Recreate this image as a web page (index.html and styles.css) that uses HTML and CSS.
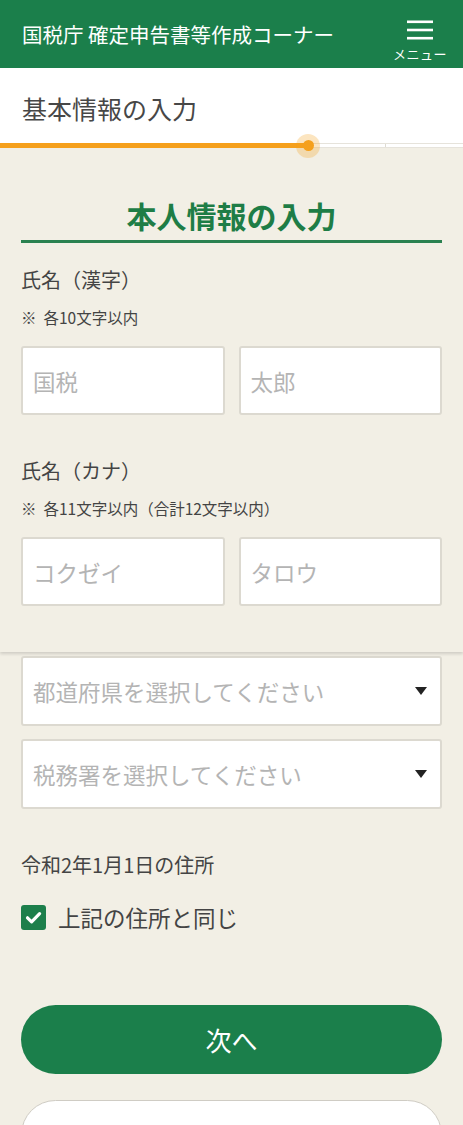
FILE: index.html
```html
<!DOCTYPE html>
<html lang="ja">
<head>
<meta charset="utf-8">
<title>確定申告書等作成コーナー</title>
<link rel="stylesheet" href="styles.css">
</head>
<body>
<header class="topbar">
  <div class="topbar-title">国税庁 確定申告書等作成コーナー</div>
  <div class="menu">
    <svg class="menu-icon" width="26" height="20" viewBox="0 0 26 20">
      <rect x="0" y="0.5" width="26" height="2.6" fill="#fff"/>
      <rect x="0" y="8.7" width="26" height="2.6" fill="#fff"/>
      <rect x="0" y="16.9" width="26" height="2.6" fill="#fff"/>
    </svg>
    <span class="menu-label">メニュー</span>
  </div>
</header>

<div class="stepbar">
  <div class="step-title">基本情報の入力</div>
</div>
<div class="progress">
  <div class="progress-fill"></div>
  <div class="progress-rest">
    <span class="seg seg-a"></span>
    <span class="seg seg-b"></span>
  </div>
  <span class="progress-dot"></span>
</div>

<section class="card">
  <h1 class="section-title">本人情報の入力</h1>

  <div class="field field-first">
    <div class="label">氏名（漢字）</div>
    <div class="note">※&nbsp; 各10文字以内</div>
    <div class="pair">
      <div class="input"><span class="ph">国税</span></div>
      <div class="input"><span class="ph">太郎</span></div>
    </div>
  </div>

  <div class="field">
    <div class="label">氏名（カナ）</div>
    <div class="note">※&nbsp; 各11文字以内（合計12文字以内）</div>
    <div class="pair">
      <div class="input"><span class="ph">コクゼイ</span></div>
      <div class="input"><span class="ph">タロウ</span></div>
    </div>
  </div>
</section>

<main class="lower">
  <div class="select"><span class="ph">都道府県を選択してください</span><span class="caret"></span></div>
  <div class="select select-second"><span class="ph">税務署を選択してください</span><span class="caret"></span></div>

  <div class="label label-addr">令和2年1月1日の住所</div>
  <div class="check-row">
    <span class="checkbox">
      <svg width="25" height="25" viewBox="0 0 25 25">
        <path d="M6.5 12.8 L10.6 16.8 L18.6 8.6" fill="none" stroke="#fff" stroke-width="3.2" stroke-linecap="round" stroke-linejoin="round"/>
      </svg>
    </span>
    <span class="check-label">上記の住所と同じ</span>
  </div>

  <div class="btn btn-primary">次へ</div>
  <div class="btn btn-secondary">戻る</div>
</main>
</body>
</html>
```

FILE: styles.css
```css
* { box-sizing: border-box; }

html, body {
  margin: 0;
  padding: 0;
}

body {
  background: #f2efe5;
  font-family: "Noto Sans CJK JP", "Noto Sans", sans-serif;
  color: #444;
  width: 463px;
  overflow: hidden;
}

.topbar {
  height: 68px;
  background: #1b7f4b;
  display: flex;
  align-items: center;
  justify-content: space-between;
  padding: 0 15px 0 22px;
}

.topbar-title {
  color: #fff;
  font-size: 20.5px;
  line-height: 28px;
  margin-top: -1px;
}

.menu {
  width: 56px;
  display: flex;
  flex-direction: column;
  align-items: center;
  padding-top: 13px;
}

.menu-icon { display: block; }

.menu-label {
  color: #fff;
  font-size: 13px;
  line-height: 16px;
  margin-top: 6px;
  letter-spacing: 0.5px;
}

.stepbar {
  background: #fff;
  height: 75px;
  padding: 24px 22px 0;
}

.step-title {
  font-size: 25px;
  line-height: 32px;
  color: #474747;
}

.progress {
  position: relative;
  z-index: 2;
  height: 5px;
  display: flex;
  background: #fff;
}

.progress-fill {
  width: 308px;
  height: 5px;
  background: #f5a01c;
}

.progress-rest {
  flex: 1;
  display: flex;
  border-top: 1px solid #e6e3db;
  border-bottom: 1px solid #e6e3db;
}

.seg { height: 100%; background: #fff; }
.seg-a { width: 78px; border-right: 1px solid #dedbd2; }
.seg-b { flex: 1; }

.progress-dot {
  position: absolute;
  left: 296px;
  top: -9.5px;
  width: 24px;
  height: 24px;
  border-radius: 50%;
  background: rgba(245, 160, 28, 0.28);
}

.progress-dot::after {
  content: "";
  position: absolute;
  left: 6.5px;
  top: 6.5px;
  width: 11px;
  height: 11px;
  border-radius: 50%;
  background: #f5a01c;
}

.card {
  background: #f2efe5;
  padding: 49px 21px 46px;
  box-shadow: 0 2px 3px rgba(0, 0, 0, 0.14);
  position: relative;
  z-index: 1;
}

.section-title {
  margin: 0;
  font-size: 30px;
  line-height: 36px;
  font-weight: 700;
  color: #1e7d46;
  text-align: center;
  padding-bottom: 7px;
  border-bottom: 3px solid #2a8150;
}

.field { margin-top: 42px; }
.field-first { margin-top: 23px; }

.label {
  font-size: 20px;
  line-height: 28px;
  color: #444;
}

.note {
  margin-top: 12px;
  font-size: 15.5px;
  line-height: 22px;
  color: #444;
}

.pair {
  margin-top: 18px;
  display: grid;
  grid-template-columns: 1fr 1fr;
  gap: 14px;
}

.input {
  height: 69px;
  background: #fff;
  border: 2px solid #dcd9d0;
  border-radius: 3px;
  display: flex;
  align-items: center;
  padding-left: 10px;
}

.ph {
  font-size: 22.5px;
  line-height: 30px;
  color: #b4b4b4;
}

.lower {
  padding: 4px 21px 0;
}

.select {
  height: 70px;
  background: #fff;
  border: 2px solid #dcd9d0;
  border-radius: 3px;
  display: flex;
  align-items: center;
  justify-content: space-between;
  padding: 0 13px 0 10px;
}

.select-second { margin-top: 13px; }

.caret {
  width: 0;
  height: 0;
  border-left: 6px solid transparent;
  border-right: 6px solid transparent;
  border-top: 8px solid #222;
}

.label-addr { margin-top: 42px; }

.check-row {
  margin-top: 23px;
  display: flex;
  align-items: center;
  height: 30px;
}

.checkbox {
  width: 25px;
  height: 25px;
  border-radius: 3px;
  background: #1d7f4b;
  display: flex;
  align-items: center;
  justify-content: center;
}

.checkbox svg { display: block; }

.check-label {
  margin-left: 12px;
  font-size: 22.5px;
  line-height: 30px;
  color: #444;
}

.btn {
  height: 69px;
  border-radius: 35px;
  display: flex;
  align-items: center;
  justify-content: center;
  font-size: 26px;
}

.btn-primary {
  margin-top: 73px;
  background: #1b7f4b;
  color: #fff;
}

.btn-secondary {
  margin-top: 26px;
  background: #fff;
  border: 1.5px solid #cfccc4;
  color: #444;
}
```
